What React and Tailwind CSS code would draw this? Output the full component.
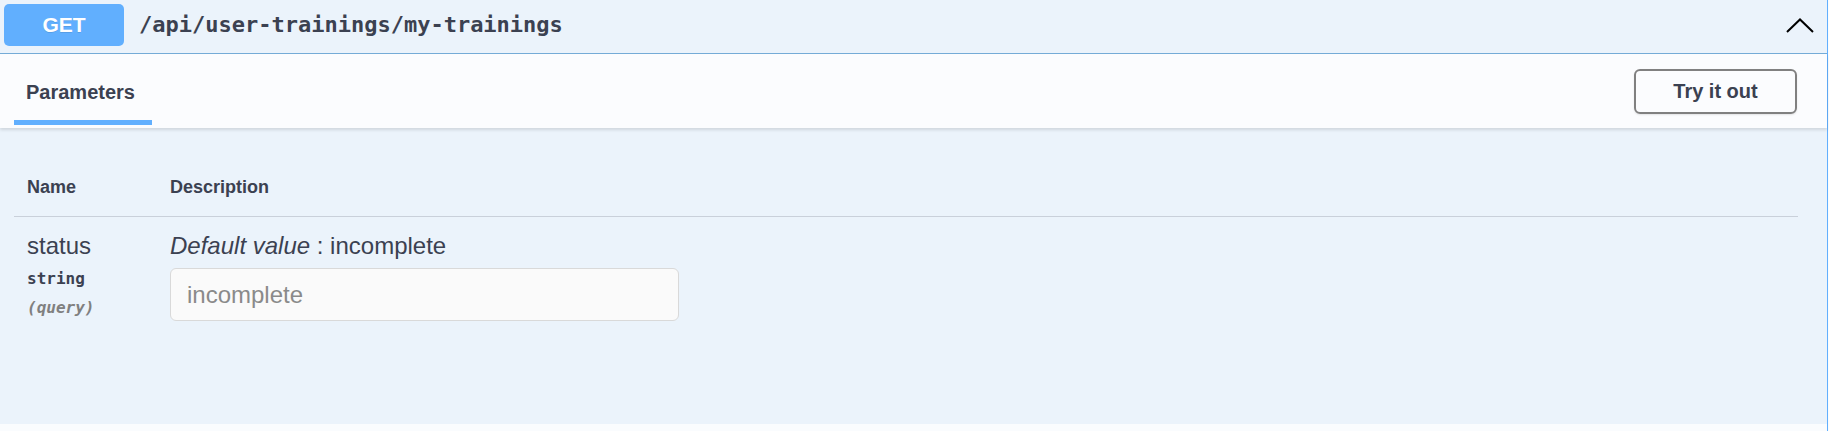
import React from 'react';

const sans = { fontFamily: '"Liberation Sans", Arial, sans-serif' };
const mono = { fontFamily: '"DejaVu Sans Mono", "Liberation Mono", monospace' };

const Chevron = () => (
  <svg width="28" height="15" viewBox="0 0 28 15" fill="none">
    <path d="M1 14 L14 1.5 L27 14" stroke="#000" strokeWidth="2" />
  </svg>
);

const ParamRow = ({ name, type, location, defaultValue }) => (
  <div className="flex pt-[14px]">
    <div className="w-[156px] pl-[13px] flex flex-col">
      <div className="text-[24px] leading-[30px] text-[#3b4151]">{name}</div>
      <div className="mt-[8px] text-[16px] leading-[20px] font-bold text-[#3b4151]" style={mono}>
        {type}
      </div>
      <div className="mt-[9px] text-[16px] leading-[20px] font-bold italic text-[#808080]" style={mono}>
        ({location})
      </div>
    </div>
    <div className="flex flex-col">
      <div className="text-[24px] leading-[30px] text-[#3b4151]">
        <i>Default value</i> : {defaultValue}
      </div>
      <input
        className="mt-[7px] w-[509px] h-[53px] rounded-[6px] border border-[#d9d9d9] bg-[#fafafa] pl-[16px] text-[24px] text-[#3b4151] placeholder:text-[#8a8a8a] outline-none"
        style={sans}
        placeholder={defaultValue}
      />
    </div>
  </div>
);

const App = () => {
  return (
    <div className="w-[1829px] h-[431px] bg-[#fafcfe] overflow-hidden" style={sans}>
      <div className="w-[1828px] h-[431px] border-r border-[#61affe] flex flex-col">
        <div className="h-[424px] bg-[#ebf3fb] flex flex-col">
          {/* summary */}
          <div className="h-[54px] flex items-center pl-[4px] pb-[4px] border-b border-[#75acd8]">
            <div className="w-[120px] h-[42px] rounded-[5px] bg-[#61affe] flex items-center justify-center text-white font-bold text-[21px] [text-shadow:0_1px_0_rgba(0,0,0,0.1)]">
              GET
            </div>
            <div className="ml-[15px] text-[22px] font-bold text-[#3b4151]" style={mono}>
              /api/user-trainings/my-trainings
            </div>
            <div className="ml-auto mr-[13px] pt-[1px]">
              <Chevron />
            </div>
          </div>

          {/* section header */}
          <div className="h-[74px] bg-[#fbfcfe] shadow-[0_2px_3px_rgba(0,0,0,0.12)] flex items-center justify-between pl-[14px] pr-[30px]">
            <div className="w-[138px] h-full flex flex-col">
              <div className="flex-1 flex items-center pl-[12px] pt-[10px] text-[20px] font-bold text-[#3b4151]">
                Parameters
              </div>
              <div className="h-[5px] bg-[#61affe]" />
              <div className="h-[3px]" />
            </div>
            <button className="w-[163px] h-[45px] rounded-[6px] border-2 border-[#808080] bg-transparent text-[20px] font-bold text-[#3b4151] shadow-[0_1px_2px_rgba(0,0,0,0.1)]">
              Try it out
            </button>
          </div>

          {/* parameters table */}
          <div className="px-[14px] pr-[29px] flex flex-col">
            <div className="flex pt-[47px] pb-[17px] border-b border-[#c9d0da] text-[18px] leading-[24px] font-bold text-[#3b4151]">
              <div className="w-[156px] pl-[13px]">Name</div>
              <div>Description</div>
            </div>
            <ParamRow name="status" type="string" location="query" defaultValue="incomplete" />
          </div>
        </div>
      </div>
    </div>
  );
};

export default App;
